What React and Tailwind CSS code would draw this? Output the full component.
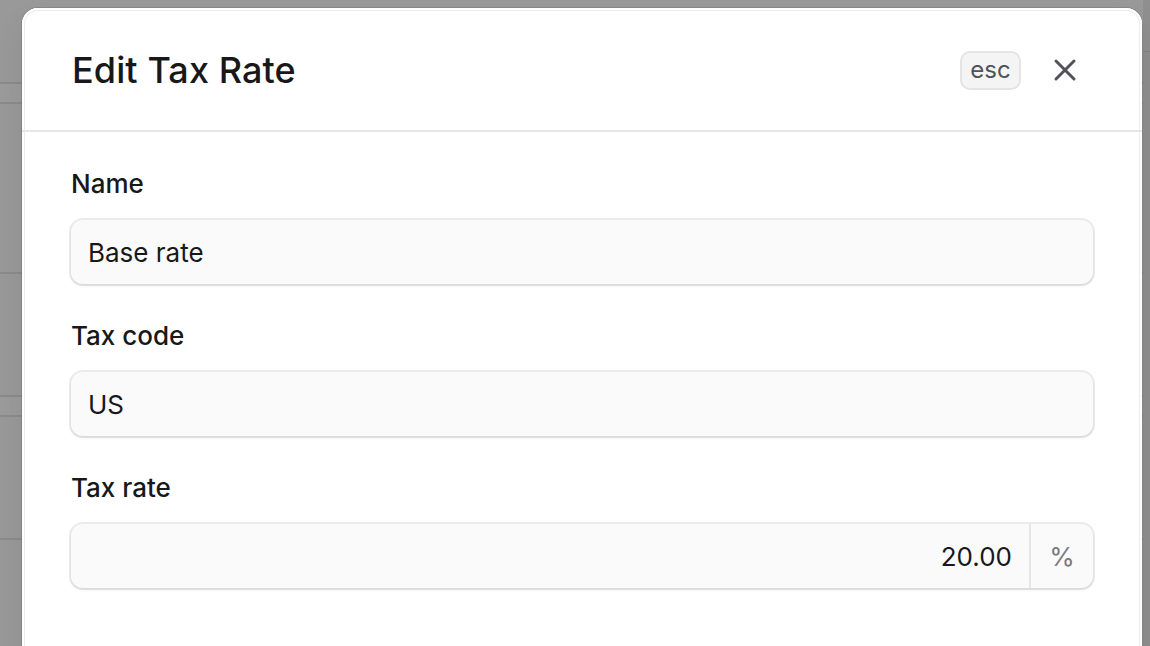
import React from "react";

const Field = ({ label, children }) => (
  <div className="flex flex-col gap-4">
    <label className="text-[26px] leading-[40px] font-medium text-[#18181b]">{label}</label>
    {children}
  </div>
);

const inputBox =
  "h-[64px] w-full rounded-[12px] bg-[#fafafa] shadow-[0_0_0_2px_rgba(0,0,0,0.08),0_2px_3px_rgba(0,0,0,0.08)] text-[26px] text-[#18181b]";

export default function App() {
  return (
    <div
      className="relative w-[1150px] h-[646px] overflow-hidden bg-[#999999]"
      style={{ fontFamily: "Inter, 'Noto Sans', sans-serif" }}
    >
      {/* page behind the overlay */}
      <div className="flex h-full">
        <div className="flex w-[1143px] flex-col">
          <div className="h-[84px] border-b-2 border-[#8b8b8b]" />
          <div className="h-[20px] border-b-2 border-[#8b8b8b] bg-[#9b9b9b]" />
          <div className="h-[170px] border-b-2 border-[#8b8b8b]" />
          <div className="h-[123px] border-b-2 border-[#8b8b8b]" />
          <div className="h-[20px] border-b-2 border-[#8b8b8b] bg-[#9b9b9b]" />
          <div className="h-[123px] border-b-2 border-[#8b8b8b]" />
        </div>
        <div className="flex-1 bg-[#8f8f8f]">
          <div className="h-[52px] border-b border-[#858585]" />
        </div>
      </div>

      {/* modal */}
      <div className="absolute left-[22px] top-[8px] w-[1120px] h-[700px] rounded-[16px] bg-white shadow-[inset_0_0_0_2px_#ffffff,inset_0_0_0_3px_rgba(228,228,231,0.7),0_0_0_1px_rgba(0,0,0,0.1),0_16px_32px_rgba(0,0,0,0.08)]">
        <div className="flex h-[124px] items-center justify-between border-b-2 border-[#e6e6e8] pl-[50px] pr-[49px] pt-[2px]">
          <h1 className="text-[36px] font-medium text-[#18181b] tracking-[0.1px]">Edit Tax Rate</h1>
          <div className="flex items-center gap-4">
            <span className="flex h-[39px] w-[61px] items-center justify-center rounded-[10px] border-2 border-[#e4e4e7] bg-[#f4f4f5] text-[24px] text-[#52525b]">
              esc
            </span>
            <button className="flex h-[56px] w-[56px] items-center justify-center rounded-[12px]">
              <svg width="30" height="30" viewBox="0 0 15 15" fill="none">
                <path
                  d="M3 3L12 12M12 3L3 12"
                  stroke="#52525b"
                  strokeWidth="1.5"
                  strokeLinecap="round"
                />
              </svg>
            </button>
          </div>
        </div>

        <div className="flex flex-col gap-8 px-[49px] pt-[32px]">
          <Field label="Name">
            <div className={inputBox + " flex items-center px-[17px]"}>Base rate</div>
          </Field>
          <Field label="Tax code">
            <div className={inputBox + " flex items-center px-[17px]"}>US</div>
          </Field>
          <Field label="Tax rate">
            <div className={inputBox + " flex items-stretch"}>
              <div className="flex flex-1 items-center justify-end pr-[17px]">20.00</div>
              <div className="flex w-[64px] items-center justify-center border-l-2 border-[#e6e6e8] text-[#7a7a80]">
                %
              </div>
            </div>
          </Field>
        </div>
      </div>
    </div>
  );
}
